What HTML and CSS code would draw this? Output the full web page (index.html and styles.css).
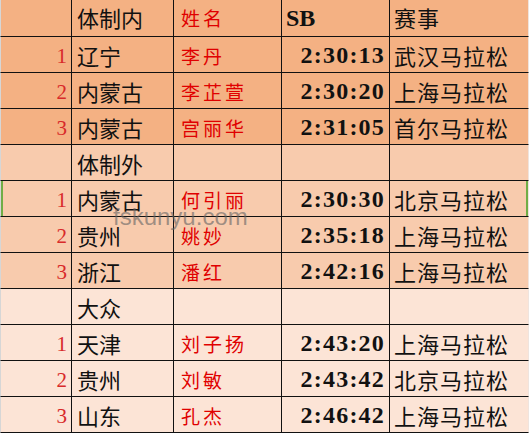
FILE: index.html
```html
<!DOCTYPE html>
<html lang="zh-CN">
<head>
<meta charset="utf-8">
<title>马拉松成绩</title>
<link rel="stylesheet" href="styles.css">
</head>
<body>
<div class="sheet">
  <div class="row s1 first">
    <div class="c num"></div><div class="c prov">体制内</div><div class="c name">姓名</div><div class="c sb">SB</div><div class="c race">赛事</div>
  </div>
  <div class="row s1">
    <div class="c num">1</div><div class="c prov">辽宁</div><div class="c name">李丹</div><div class="c time">2:30:13</div><div class="c race">武汉马拉松</div>
  </div>
  <div class="row s1">
    <div class="c num">2</div><div class="c prov">内蒙古</div><div class="c name">李芷萱</div><div class="c time">2:30:20</div><div class="c race">上海马拉松</div>
  </div>
  <div class="row s1">
    <div class="c num">3</div><div class="c prov">内蒙古</div><div class="c name">宫丽华</div><div class="c time">2:31:05</div><div class="c race">首尔马拉松</div>
  </div>
  <div class="row s2">
    <div class="c num"></div><div class="c prov">体制外</div><div class="c name"></div><div class="c time"></div><div class="c race"></div>
  </div>
  <div class="row s2 sel">
    <div class="c num">1</div><div class="c prov">内蒙古</div><div class="c name">何引丽</div><div class="c time">2:30:30</div><div class="c race">北京马拉松</div>
  </div>
  <div class="row s2">
    <div class="c num">2</div><div class="c prov">贵州</div><div class="c name">姚妙</div><div class="c time">2:35:18</div><div class="c race">上海马拉松</div>
  </div>
  <div class="row s2">
    <div class="c num">3</div><div class="c prov">浙江</div><div class="c name">潘红</div><div class="c time">2:42:16</div><div class="c race">上海马拉松</div>
  </div>
  <div class="row s3">
    <div class="c num"></div><div class="c prov">大众</div><div class="c name"></div><div class="c time"></div><div class="c race"></div>
  </div>
  <div class="row s3">
    <div class="c num">1</div><div class="c prov">天津</div><div class="c name">刘子扬</div><div class="c time">2:43:20</div><div class="c race">上海马拉松</div>
  </div>
  <div class="row s3">
    <div class="c num">2</div><div class="c prov">贵州</div><div class="c name">刘敏</div><div class="c time">2:43:42</div><div class="c race">北京马拉松</div>
  </div>
  <div class="row s3">
    <div class="c num">3</div><div class="c prov">山东</div><div class="c name">孔杰</div><div class="c time">2:46:42</div><div class="c race">上海马拉松</div>
  </div>
  <div class="watermark">fskunyu.com</div>
</div>
</body>
</html>
```

FILE: styles.css
```css
html, body {
  margin: 0;
  padding: 0;
  background: #ffffff;
}

.sheet {
  position: relative;
  width: 529px;
  height: 435px;
  overflow: hidden;
}

.row {
  display: grid;
  grid-template-columns: 72px 102px 108px 108px 139px;
  height: 36px;
}

.row.first {
  height: 37px;
}

.s1 { background: #f4b183; }
.s2 { background: #f8cbad; }
.s3 { background: #fce4d6; }

.c {
  box-sizing: border-box;
  border-right: 1px solid #111;
  border-bottom: 1px solid #111;
  display: flex;
  align-items: flex-end;
  padding-bottom: 2px;
  white-space: nowrap;
  overflow: hidden;
}

.c.num {
  border-left: 1px solid #d6d6d6;
  justify-content: flex-end;
  padding-right: 4px;
  font-family: "Liberation Serif", serif;
  font-size: 21px;
  color: #d82a2a;
  padding-bottom: 3px;
}

.c.prov {
  padding-left: 5px;
  font-family: "Noto Sans CJK SC", sans-serif;
  font-size: 22px;
  color: #111;
  line-height: 30px;
}

.c.name {
  padding-left: 7px;
  font-family: "Noto Sans CJK SC", sans-serif;
  font-size: 19px;
  letter-spacing: 3px;
  color: #e00000;
  line-height: 28px;
}

.c.sb {
  padding-left: 4px;
  font-family: "Liberation Serif", serif;
  font-weight: bold;
  font-size: 24px;
  color: #111;
  padding-bottom: 4px;
}

.c.time {
  justify-content: flex-end;
  padding-right: 4px;
  font-family: "Liberation Serif", serif;
  font-weight: bold;
  font-size: 24px;
  letter-spacing: 1.2px;
  color: #111;
  padding-bottom: 3px;
}

.c.race {
  padding-left: 4px;
  border-right: 1px solid #efe4de;
  font-family: "Noto Sans CJK SC", sans-serif;
  font-size: 22px;
  letter-spacing: 1px;
  color: #111;
  line-height: 30px;
}

.row.first .c {
  padding-bottom: 4px;
}

.row.sel .c.num {
  box-shadow: inset 2px 0 0 #70ad47;
}

.row.sel .c.race {
  box-shadow: inset -2px 0 0 #70ad47;
}

.watermark {
  position: absolute;
  left: 113px;
  top: 205px;
  font-family: "Liberation Sans", Arial, sans-serif;
  font-size: 24px;
  line-height: 24px;
  color: rgba(100, 100, 100, 0.6);
  pointer-events: none;
}
```
